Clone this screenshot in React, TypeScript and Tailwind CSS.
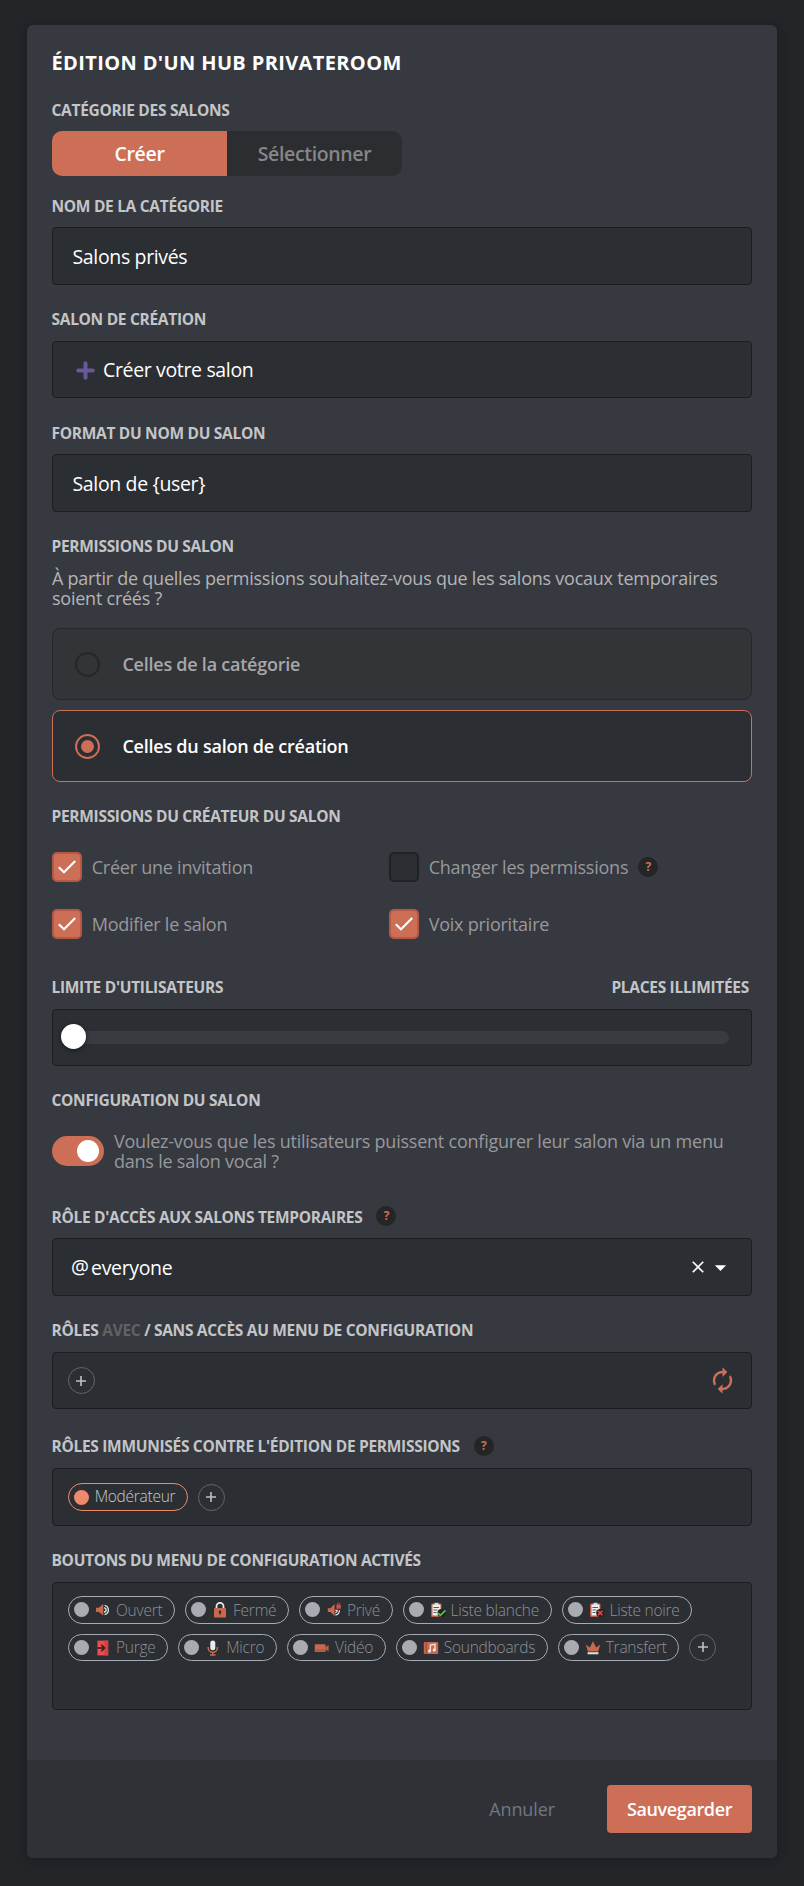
import React from "react";
import { MdArrowDropDown, MdAutorenew, MdClose } from "react-icons/md";

const BOX = "rounded-[4px] border border-[#1b1d1f] bg-[#2b2e32]";
const VALUE = "text-[19.5px] tracking-[-0.35px] text-white";

function Label({ children, className = "" }: { children: React.ReactNode; className?: string }) {
  return (
    <div
      className={`-ml-[0.5px] flex h-5 items-center whitespace-pre text-[15.5px] leading-5 font-bold tracking-[-0.3px] text-[#c4c5c7] ${className}`}
    >
      {children}
    </div>
  );
}

function Help({ className = "" }: { className?: string }) {
  return (
    <span
      className={`flex size-5 shrink-0 items-center justify-center rounded-full bg-[#242526] text-[12px] leading-none font-bold text-[#cd6e57] ${className}`}
    >
      ?
    </span>
  );
}

function Radio({ label, selected = false, className = "" }: { label: string; selected?: boolean; className?: string }) {
  return (
    <div
      className={`flex h-[72px] items-center rounded-[8px] border pl-[22.4px] text-[18px] font-semibold tracking-[-0.24px] ${
        selected ? "border-[#cd6e57] bg-[#2b2e32] text-white" : "border-[#252729] bg-[#333438] text-[#a7a8aa]"
      } ${className}`}
    >
      <span
        className={`mr-[22px] flex size-[25px] items-center justify-center rounded-full border-2 ${
          selected ? "border-[#cd6e57]" : "border-[#252729]"
        }`}
      >
        {selected && <span className="size-[13px] rounded-full bg-[#cd6e57]" />}
      </span>
      {label}
    </div>
  );
}

function Check({ label, checked = false, help = false }: { label: string; checked?: boolean; help?: boolean }) {
  return (
    <div className="flex h-[30px] items-center text-[18px] tracking-[-0.24px] text-[#97989b]">
      <span
        className={`mr-[9.7px] flex size-[30px] items-center justify-center rounded-[5px] border-2 ${
          checked ? "border-[#b45944] bg-[#cd6e57]" : "border-[#202224] bg-[#2b2e32]"
        }`}
      >
        {checked && (
          <svg width="20" height="16" viewBox="0 0 20 16" fill="none">
            <path d="M1.8 8.2 7 13.2 18.2 2" stroke="#fff" strokeWidth="2.1" />
          </svg>
        )}
      </span>
      {label}
      {help && <Help className="ml-[10px]" />}
    </div>
  );
}

function AddButton({ className = "" }: { className?: string }) {
  return (
    <span className={`flex size-[27px] items-center justify-center rounded-full border border-[#646669] ${className}`}>
      <svg width="10" height="10" viewBox="0 0 10 10" fill="none" stroke="#bfc0c2" strokeWidth="1.6">
        <path d="M5 0v10M0 5h10" />
      </svg>
    </span>
  );
}

const glyphs: Record<string, React.ReactNode> = {
  ouvert: (
    <>
      <path d="M1 5.8h2.8L8.3 2v11.6L3.8 10H1z" fill="#c8694f" />
      <path d="M9 5.8a2.1 2.1 0 0 1 0 4.2M9.6 3.3a4.7 4.7 0 0 1 0 9.2" fill="none" stroke="#e6e7e8" strokeWidth="1.3" />
    </>
  ),
  ferme: (
    <>
      <path d="M4.5 7V4.3a3.5 3.5 0 0 1 7 0V7" fill="none" stroke="#e6e7e8" strokeWidth="1.8" />
      <rect x="2" y="6" width="12" height="9.6" rx="1" fill="#c8694f" />
      <path d="M8 9v3.6" stroke="#3a2521" strokeWidth="1.4" />
      <circle cx="8" cy="9.7" r="1.3" fill="#3a2521" />
    </>
  ),
  prive: (
    <>
      <path d="M1.8 6.3h2.6L8.6 2v12L4.4 10H1.8z" fill="#c8694f" />
      <path d="M9.4 8.3h1.8a2.6 2.6 0 0 1-1.8 2.6M13.4 8.3a5 5 0 0 1-4 4.9" fill="none" stroke="#e6e7e8" strokeWidth="1.2" />
      <path d="M11.4 3.2v-1a1.2 1.2 0 0 1 2.4 0v1" fill="none" stroke="#d84545" />
      <rect x="10.4" y="2.8" width="4.4" height="4" rx=".6" fill="#e04848" />
    </>
  ),
  blanche: (
    <>
      <rect x="1" y="1.5" width="10.5" height="13.5" rx="1" fill="#b95b43" />
      <path d="M2.5 2.5h8v11h-8z" fill="#f1f1f1" />
      <path d="M4.5.8h4v2.4h-4z" fill="#d9dadb" />
      <path d="M3.5 5.5h5.5M3.5 8h4M3.5 10.5h3" stroke="#55575b" />
      <circle cx="11.5" cy="11" r="4" fill="#202225" />
      <path d="m8.2 11.2 2.2 2.2 5-5" fill="none" stroke="#5fbf4a" strokeWidth="1.7" />
    </>
  ),
  noire: (
    <>
      <rect x="1" y="1.5" width="10.5" height="13.5" rx="1" fill="#b95b43" />
      <path d="M2.5 2.5h8v11h-8z" fill="#f1f1f1" />
      <path d="M4.5.8h4v2.4h-4z" fill="#d9dadb" />
      <path d="M3.5 5.5h5.5M3.5 8h4M3.5 10.5h3" stroke="#55575b" />
      <circle cx="11.2" cy="11" r="4" fill="#202225" />
      <path d="m9 8.8 4.4 4.4m0-4.4L9 13.2" stroke="#e04545" strokeWidth="1.7" />
    </>
  ),
  purge: (
    <>
      <path d="M2.4.6h10.8v14.8H2.4z" fill="#e84f50" />
      <path d="M9.4.6h3.8v14.8H9.4z" fill="#d53f42" />
      <path d="M2.4 8h6.8M6.4 4.8 9.6 8l-3.2 3.2" fill="none" stroke="#33191c" strokeWidth="1.4" />
    </>
  ),
  micro: (
    <>
      <rect x="5.3" y=".4" width="5" height="9.8" rx="2.5" fill="#ebebec" />
      <path d="M3.2 7v.8a4.6 4.6 0 0 0 9.2 0V7M7.8 12.2v2.6M5 15h5.6" fill="none" stroke="#c8694f" strokeWidth="1.5" />
    </>
  ),
  video: (
    <>
      <rect x=".8" y="4.3" width="10.8" height="7.6" rx=".8" fill="#c8694f" />
      <path d="M.8 9h10.8v2.9H.8z" fill="#b65b44" />
      <path d="M11.2 7.2 14.6 5v6.4l-3.4-2.2z" fill="#b65b44" />
    </>
  ),
  soundboards: (
    <>
      <rect x=".8" y="2" width="14.4" height="12" rx="1.2" fill="#c8694f" />
      <path d="M3.2 2v12" stroke="#96452f" />
      <path d="M7.3 10.6V5.1L12 4.2V10" fill="none" stroke="#f3ece9" strokeWidth="1.3" />
      <circle cx="6.5" cy="10.9" r="1.5" fill="#f3ece9" />
      <circle cx="11.2" cy="10.1" r="1.5" fill="#f3ece9" />
    </>
  ),
  transfert: (
    <>
      <path d="m.8 4.6 4 3L8 1.2l3.2 6.4 4-3-2 7H2.8z" fill="#c8694f" />
      <path d="M2.6 12.2h10.8v2.1H2.6z" fill="#e3dedb" />
    </>
  ),
};

const buttons: [string, string][] = [
  ["ouvert", "Ouvert"],
  ["ferme", "Fermé"],
  ["prive", "Privé"],
  ["blanche", "Liste blanche"],
  ["noire", "Liste noire"],
  ["purge", "Purge"],
  ["micro", "Micro"],
  ["video", "Vidéo"],
  ["soundboards", "Soundboards"],
  ["transfert", "Transfert"],
];

function Chip({ icon, label }: { icon: string; label: string }) {
  return (
    <span className="flex h-[27.6px] items-center rounded-full border border-[#a9abb2] pr-[11.6px] pl-[5px] text-[15.5px] font-light tracking-[-0.24px] whitespace-nowrap text-[#8f9196]">
      <span className="size-[15px] rounded-full bg-[#a9abb2]" />
      <svg className="mr-[5px] ml-[6px]" width="16" height="16" viewBox="0 0 16 16">
        {glyphs[icon]}
      </svg>
      <span className="pt-[0.8px]">{label}</span>
    </span>
  );
}

export default function App() {
  return (
    <div className="h-[1886px] w-[804px] bg-[#242529] px-[27px] pt-[25px] font-['Open_Sans',sans-serif]">
      <main className="flex h-[1833px] flex-col overflow-hidden rounded-[6px] bg-[#373940] shadow-[0_2px_12px_2px_rgba(0,0,0,0.2)]">
        <div className="flex flex-col px-[25px] pt-[24px]">
          <h1 className="-ml-[0.5px] h-7 text-[20px] leading-7 font-bold tracking-[0.37px] text-white">
            ÉDITION D'UN HUB PRIVATEROOM
          </h1>

          <Label className="mt-[23px]">CATÉGORIE DES SALONS</Label>
          <div className="mt-[11px] flex h-[45px] w-[350px] overflow-hidden rounded-[10px] text-[19.5px] font-semibold tracking-[-0.35px]">
            <div className="flex flex-1 items-center justify-center bg-[#cd6e57] pt-px text-white">Créer</div>
            <div className="flex flex-1 items-center justify-center bg-[#2b2d30] pt-px text-[#858688]">Sélectionner</div>
          </div>

          <Label className="mt-5">NOM DE LA CATÉGORIE</Label>
          <div className={`mt-[11px] flex h-[58px] items-center pt-px pl-[19.5px] ${VALUE} ${BOX}`}>Salons privés</div>

          <Label className="mt-6">SALON DE CRÉATION</Label>
          <div className={`mt-3 flex h-[57px] items-center pt-px pl-[23px] ${VALUE} ${BOX}`}>
            <svg className="mr-2" width="19" height="19" viewBox="0 0 19 19" stroke="#66589a" strokeWidth="4" strokeLinecap="round">
              <path d="M9.5 2.2v14.6M2.2 9.5h14.6" />
            </svg>
            Créer votre salon
          </div>

          <Label className="mt-[25px]">FORMAT DU NOM DU SALON</Label>
          <div className={`mt-[11px] flex h-[58px] items-center pt-px pl-[19.5px] ${VALUE} ${BOX}`}>{"Salon de {user}"}</div>

          <Label className="mt-6">PERMISSIONS DU SALON</Label>
          <p className="mt-3 text-[18px] leading-5 tracking-[-0.24px] whitespace-nowrap text-[#b3b4b6]">
            À partir de quelles permissions souhaitez-vous que les salons vocaux temporaires
            <br />
            soient créés ?
          </p>
          <Radio className="mt-5" label="Celles de la catégorie" />
          <Radio className="mt-2.5" label="Celles du salon de création" selected />

          <Label className="mt-6">PERMISSIONS DU CRÉATEUR DU SALON</Label>
          <div className="mt-[26px] grid grid-cols-[337px_1fr] gap-y-[27px]">
            <Check label="Créer une invitation" checked />
            <Check label="Changer les permissions" help />
            <Check label="Modifier le salon" checked />
            <Check label="Voix prioritaire" checked />
          </div>

          <Label className="mt-[38px] justify-between pr-[3px]">
            <span>LIMITE D'UTILISATEURS</span>
            <span>PLACES ILLIMITÉES</span>
          </Label>
          <div className={`mt-3 flex h-[57px] items-center pr-[22px] pl-[8.4px] ${BOX}`}>
            <span className="z-10 -mt-[2px] size-[25px] rounded-full bg-white shadow-[0_1px_4px_rgba(0,0,0,0.5)]" />
            <span className="-ml-3 h-[13px] flex-1 rounded-full bg-[#383b3f]" />
          </div>

          <Label className="mt-6">CONFIGURATION DU SALON</Label>
          <div className="mt-[21px] flex h-10 items-center">
            <span className="mr-[10px] flex h-[30px] w-[52px] items-center justify-end rounded-full bg-[#cd6e57] pr-[5px]">
              <span className="size-[22px] rounded-full bg-white" />
            </span>
            <p className="text-[18px] leading-5 tracking-[-0.23px] whitespace-nowrap text-[#97989b]">
              Voulez-vous que les utilisateurs puissent configurer leur salon via un menu
              <br />
              dans le salon vocal ?
            </p>
          </div>

          <Label className="mt-9">
            RÔLE D'ACCÈS AUX SALONS TEMPORAIRES
            <Help className="-mt-0.5 ml-[14px]" />
          </Label>
          <div className={`mt-[11px] flex h-[58px] items-center pr-[17px] pl-[18px] ${VALUE} ${BOX}`}>
            <span className="mr-[2.5px] text-[20px]">@</span>
            <span className="flex-1 pt-px">everyone</span>
            <MdClose className="-mr-px" size={20} />
            <MdArrowDropDown size={27} />
          </div>

          <Label className="mt-6">
            RÔLES <span className="text-[#606266]">AVEC</span> / SANS ACCÈS AU MENU DE CONFIGURATION
          </Label>
          <div className={`mt-3 flex h-[57px] items-center justify-between pr-[13.8px] pl-[14.6px] ${BOX}`}>
            <AddButton />
            <MdAutorenew size={29} color="#cd6e57" />
          </div>

          <Label className="mt-[27px]">
            RÔLES IMMUNISÉS CONTRE L'ÉDITION DE PERMISSIONS
            <Help className="ml-[14px]" />
          </Label>
          <div className={`mt-3 flex h-[58px] items-center gap-[10px] pl-[15px] ${BOX}`}>
            <span className="flex h-[28px] items-center rounded-full border border-[#ee8a6b] pr-[11.5px] pl-[5px] text-[15.5px] font-light tracking-[-0.27px] text-[#c9cacc]">
              <span className="mr-[5.7px] size-[15px] rounded-full bg-[#ee8a6b]" />
              Modérateur
            </span>
            <AddButton />
          </div>

          <Label className="mt-6">BOUTONS DU MENU DE CONFIGURATION ACTIVÉS</Label>
          <div className={`mt-3 flex h-32 flex-wrap content-start gap-x-[10px] gap-y-[10.2px] pt-[13px] pl-[15px] ${BOX}`}>
            {buttons.map(([icon, label]) => (
              <Chip key={label} icon={icon} label={label} />
            ))}
            <AddButton />
          </div>
        </div>

        <footer className="mt-auto flex h-[98px] items-center justify-end bg-[#303136] pr-[25px]">
          <button className="mr-[52px] text-[18px] tracking-[-0.1px] text-[#6d7885]">Annuler</button>
          <button className="h-12 w-[145px] rounded-[4px] bg-[#cd6e57] text-[18px] font-semibold tracking-[-0.38px] text-white">
            Sauvegarder
          </button>
        </footer>
      </main>
    </div>
  );
}
